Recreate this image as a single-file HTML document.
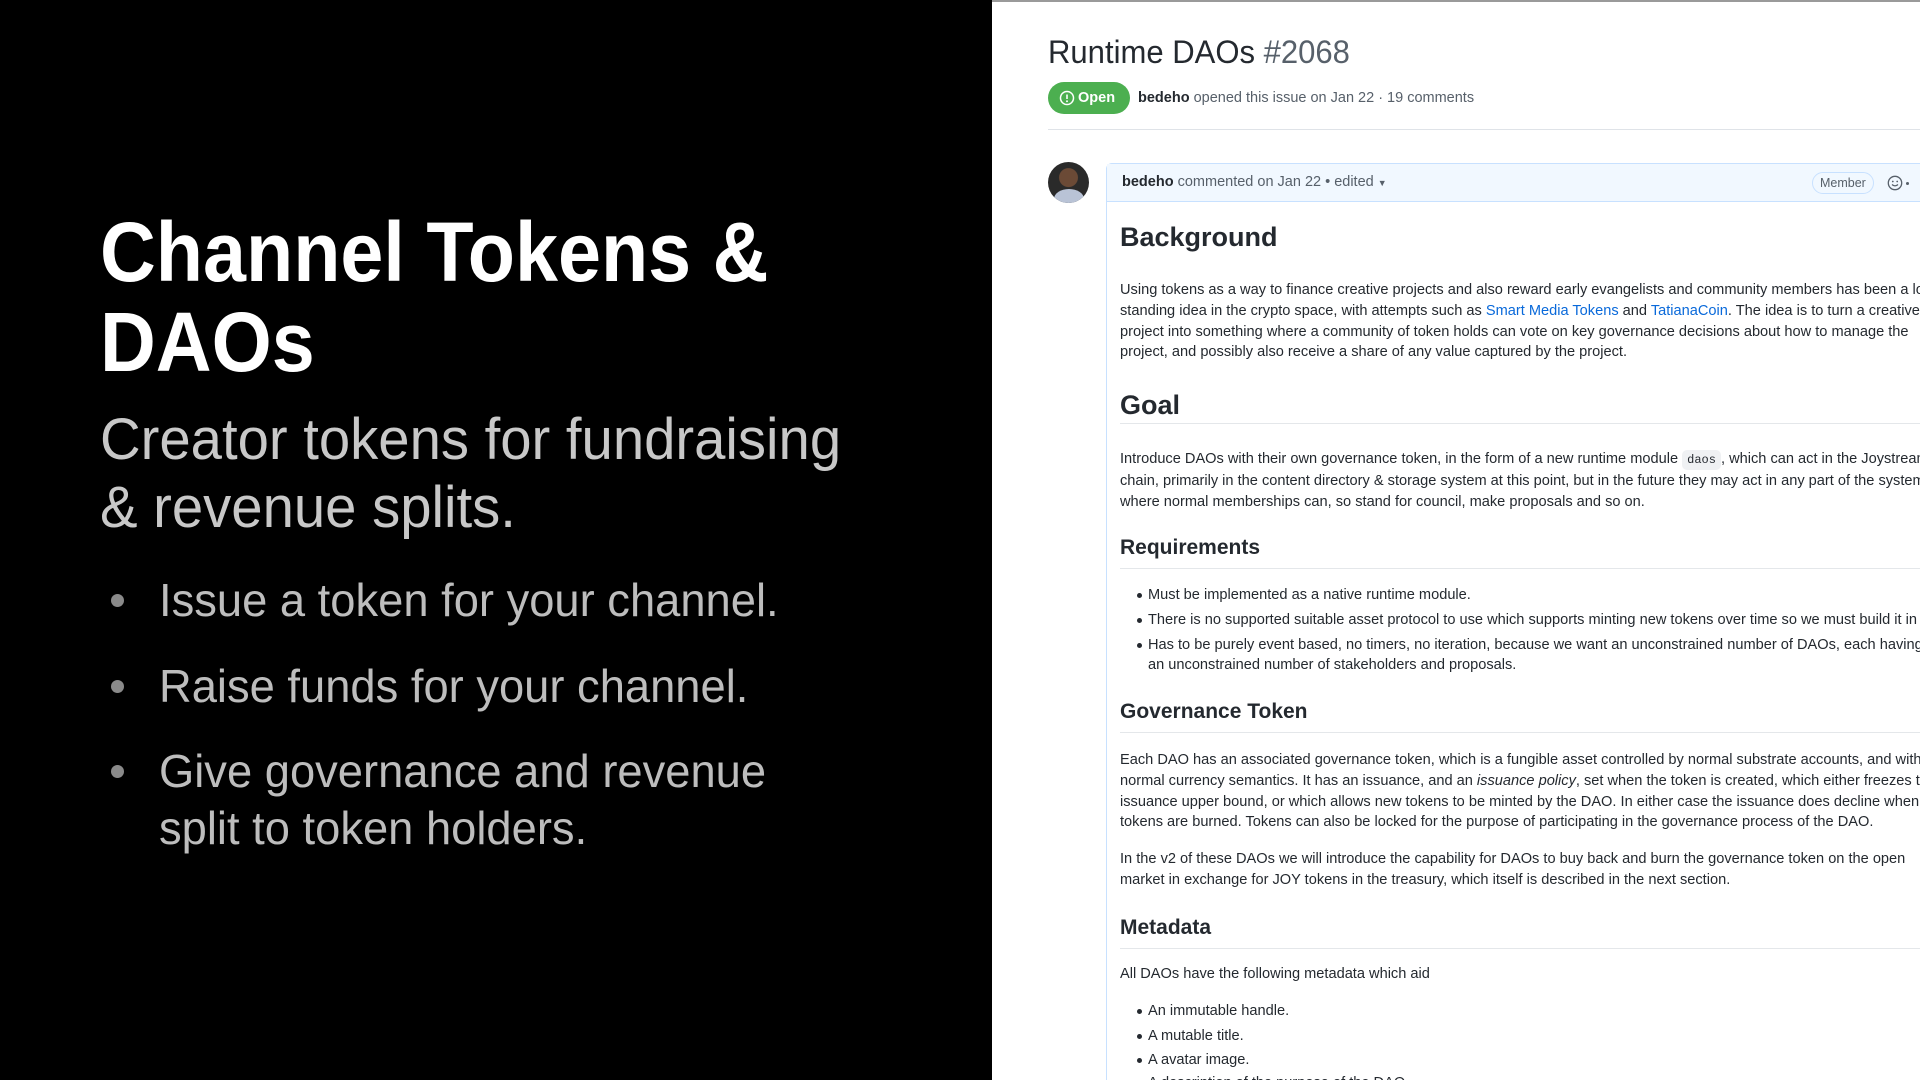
<!DOCTYPE html>
<html><head><meta charset="utf-8"><style>
*{margin:0;padding:0;box-sizing:border-box}
body{width:1920px;height:1080px;overflow:hidden;background:#000;font-family:"Liberation Sans",sans-serif;position:relative}
.l{position:absolute;left:0;top:0;width:992px;height:1080px;background:#000}
.sx{display:inline-block;transform-origin:0 0;white-space:nowrap}
.t{position:absolute;left:100px;color:#fff;font-weight:bold;font-size:84px;line-height:1}
.s{position:absolute;left:100px;color:#c8c8c8;font-size:58px;line-height:1}
.b{position:absolute;left:159px;color:#bdbdbd;font-size:46px;line-height:1}
.dot{position:absolute;left:111px;width:13px;height:13px;border-radius:50%;background:#8a8a8a}
.r{position:absolute;left:992px;top:0;width:928px;height:1080px;background:#fff;border-top:2px solid #9a9a9a;overflow:hidden;color:#24292f}
.a{position:absolute;white-space:nowrap}
.p{font-size:14.6px;line-height:20.8px}
.h1{font-size:27px;font-weight:bold}
.h2{font-size:21px;font-weight:bold}
.hr{position:absolute;left:128px;right:0;height:1px;background:#e4e7ea}
a{color:#0969da;text-decoration:none}
li{list-style:none;position:relative}
li:before{content:"";position:absolute;left:-11px;top:8px;width:5px;height:5px;border-radius:50%;background:#24292f}
code{font-family:"Liberation Mono",monospace;font-size:12px;background:#eff1f3;padding:3px 5px;border-radius:5px}
</style></head><body>
<div class="l">
<div class="t" style="top:210px"><span class="sx" style="transform:scaleX(0.92)">Channel Tokens &amp;</span></div>
<div class="t" style="top:300px"><span class="sx" style="transform:scaleX(0.92)">DAOs</span></div>
<div class="s" style="top:411px"><span class="sx" style="transform:scaleX(0.97)">Creator tokens for fundraising</span></div>
<div class="s" style="top:479px"><span class="sx" style="transform:scaleX(0.97)">&amp; revenue splits.</span></div>
<div class="dot" style="top:594px"></div>
<div class="b" style="top:577px"><span class="sx" style="transform:scaleX(0.985)">Issue a token for your channel.</span></div>
<div class="dot" style="top:680px"></div>
<div class="b" style="top:663px"><span class="sx" style="transform:scaleX(0.985)">Raise funds for your channel.</span></div>
<div class="dot" style="top:765px"></div>
<div class="b" style="top:748px"><span class="sx" style="transform:scaleX(0.985)">Give governance and revenue</span></div>
<div class="b" style="top:805px"><span class="sx" style="transform:scaleX(0.985)">split to token holders.</span></div>
</div>
<div class="r">
<div class="a" style="left:56px;top:32px;font-size:32px;color:#24292f"><span class="sx" style="transform:scaleX(0.97)">Runtime DAOs <span style="color:#57606a">#2068</span></span></div>
<div class="a" style="left:56px;top:80px;width:82px;height:32px;border-radius:16px;background:#4caf50;color:#fff;font-size:14.5px;font-weight:bold;line-height:32px;padding-left:30px">Open
<svg style="position:absolute;left:11px;top:8px" width="16" height="16" viewBox="0 0 16 16"><circle cx="8" cy="8" r="6.5" fill="none" stroke="#fff" stroke-width="1.5"/><path d="M8 4.5v4.5" stroke="#fff" stroke-width="1.6"/><circle cx="8" cy="11.3" r="1" fill="#fff"/></svg></div>
<div class="a" style="left:146px;top:88px;font-size:14.5px;color:#57606a"><b style="color:#24292f">bedeho</b> opened this issue on Jan 22 · 19 comments</div>
<div class="a" style="left:56px;right:0;top:127px;height:1px;background:#dfe3e8"></div>
<div class="a" style="left:56px;top:160px;width:41px;height:41px;border-radius:50%;background:radial-gradient(circle at 50% 38%,#6b4a36 0 28%,#2a2a2a 30%);overflow:hidden"><div style="position:absolute;left:6px;top:27px;width:30px;height:20px;border-radius:50% 50% 0 0;background:#b9c3d6"></div></div>
<div class="a" style="left:114px;top:161px;right:-2px;bottom:-2px;border:1px solid #c8e1ff;border-radius:6px 0 0 0"></div>
<div class="a" style="left:115px;top:162px;right:0;height:38px;background:#f1f8ff;border-bottom:1px solid #c8e1ff"></div>
<div class="a" style="left:130px;top:172px;font-size:14.5px;color:#57606a"><b style="color:#24292f">bedeho</b> commented on Jan 22 • edited <span style="font-size:9px">▼</span></div>
<div class="a" style="left:820px;top:170px;height:22px;padding:0 7px;border:1px solid #c8e1ff;border-radius:11px;font-size:12.5px;line-height:20px;color:#57606a">Member</div>
<svg class="a" style="left:895px;top:173px" width="16" height="16" viewBox="0 0 16 16"><circle cx="8" cy="8" r="6.7" fill="none" stroke="#57606a" stroke-width="1.3"/><circle cx="5.8" cy="6.5" r=".9" fill="#57606a"/><circle cx="10.2" cy="6.5" r=".9" fill="#57606a"/><path d="M5 9.5q3 2.8 6 0" fill="none" stroke="#57606a" stroke-width="1.2"/></svg>
<div class="a" style="left:914px;top:180px;width:3px;height:3px;background:#57606a;border-radius:50%"></div>

<div class="a h1" style="left:128px;top:220px">Background</div>
<div class="a p" style="left:128px;top:278px">Using tokens as a way to finance creative projects and also reward early evangelists and community members has been a long<br>standing idea in the crypto space, with attempts such as <a>Smart Media Tokens</a> and <a>TatianaCoin</a>. The idea is to turn a creative<br>project into something where a community of token holds can vote on key governance decisions about how to manage the<br>project, and possibly also receive a share of any value captured by the project.</div>
<div class="a h1" style="left:128px;top:388px">Goal</div>
<div class="hr" style="top:421px"></div>
<div class="a p" style="left:128px;top:447px">Introduce DAOs with their own governance token, in the form of a new runtime module <code>daos</code>, which can act in the Joystream<br>chain, primarily in the content directory &amp; storage system at this point, but in the future they may act in any part of the system<br>where normal memberships can, so stand for council, make proposals and so on.</div>
<div class="a h2" style="left:128px;top:534px">Requirements</div>
<div class="hr" style="top:566px"></div>
<ul class="a p" style="left:156px;top:583px">
<li>Must be implemented as a native runtime module.</li>
<li style="margin-top:4px">There is no supported suitable asset protocol to use which supports minting new tokens over time so we must build it in</li>
<li style="margin-top:4px">Has to be purely event based, no timers, no iteration, because we want an unconstrained number of DAOs, each having<br>an unconstrained number of stakeholders and proposals.</li></ul>
<div class="a h2" style="left:128px;top:698px">Governance Token</div>
<div class="hr" style="top:730px"></div>
<div class="a p" style="left:128px;top:748px">Each DAO has an associated governance token, which is a fungible asset controlled by normal substrate accounts, and with<br>normal currency semantics. It has an issuance, and an <i>issuance policy</i>, set when the token is created, which either freezes the<br>issuance upper bound, or which allows new tokens to be minted by the DAO. In either case the issuance does decline when<br>tokens are burned. Tokens can also be locked for the purpose of participating in the governance process of the DAO.</div>
<div class="a p" style="left:128px;top:847px">In the v2 of these DAOs we will introduce the capability for DAOs to buy back and burn the governance token on the open<br>market in exchange for JOY tokens in the treasury, which itself is described in the next section.</div>
<div class="a h2" style="left:128px;top:914px">Metadata</div>
<div class="hr" style="top:946px"></div>
<div class="a p" style="left:128px;top:962px">All DAOs have the following metadata which aid</div>
<ul class="a p" style="left:156px;top:999px">
<li>An immutable handle.</li>
<li style="margin-top:4px">A mutable title.</li>
<li style="margin-top:3px">A avatar image.</li>
<li style="margin-top:3px">A description of the purpose of the DAO.</li></ul>
</div>
</body></html>
